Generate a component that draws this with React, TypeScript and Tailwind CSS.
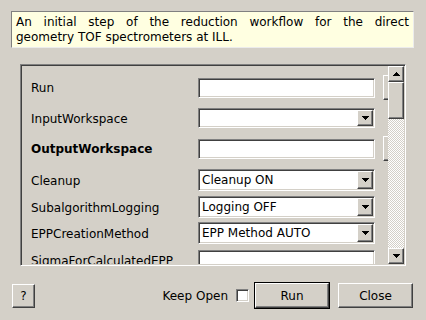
import React from "react";

const raised =
  "border border-t-white border-l-white border-r-[#404040] border-b-[#404040] shadow-[inset_-1px_-1px_0_#808080]";
const sunken =
  "border border-t-[#808080] border-l-[#808080] border-r-white border-b-white shadow-[inset_1px_1px_0_#404040,inset_-1px_-1px_0_#d4d0c8]";

function TriDown() {
  return (
    <svg width="7" height="4" viewBox="0 0 7 4" shapeRendering="crispEdges">
      <rect x="0" y="0" width="7" height="1" fill="#000" />
      <rect x="1" y="1" width="5" height="1" fill="#000" />
      <rect x="2" y="2" width="3" height="1" fill="#000" />
      <rect x="3" y="3" width="1" height="1" fill="#000" />
    </svg>
  );
}

function TriUp() {
  return (
    <svg width="7" height="4" viewBox="0 0 7 4" shapeRendering="crispEdges">
      <rect x="3" y="0" width="1" height="1" fill="#000" />
      <rect x="2" y="1" width="3" height="1" fill="#000" />
      <rect x="1" y="2" width="5" height="1" fill="#000" />
      <rect x="0" y="3" width="7" height="1" fill="#000" />
    </svg>
  );
}

function TextField() {
  return <div className={`w-[177px] h-[20px] shrink-0 bg-white ${sunken}`} />;
}

function Combo({ text, h = 22 }: { text?: string; h?: number }) {
  return (
    <div
      className={`w-[177px] shrink-0 bg-white ${sunken} flex items-stretch p-[1px] ${
        h === 22 ? "h-[22px]" : "h-[20px]"
      }`}
    >
      <div className="flex-1 flex items-center pl-[2px] text-[12px] leading-none text-black">
        {text}
      </div>
      <div className={`w-[16px] bg-[#d4d0c8] ${raised} flex items-center justify-center`}>
        <TriDown />
      </div>
    </div>
  );
}

function BrowseBtn() {
  return <div className={`ml-[8px] w-[26px] h-[25px] shrink-0 bg-[#d4d0c8] ${raised}`} />;
}

function Row({
  label,
  bold,
  mt,
  h,
  children,
}: {
  label: string;
  bold?: boolean;
  mt: string;
  h: string;
  children: React.ReactNode;
}) {
  return (
    <div className={`flex items-center pl-[9px] shrink-0 ${mt} ${h}`}>
      <div
        className={`w-[167px] shrink-0 pt-[1px] text-[12px] leading-none text-black whitespace-nowrap ${
          bold ? "font-bold" : ""
        }`}
      >
        {label}
      </div>
      {children}
    </div>
  );
}

export default function App() {
  return (
    <div className="w-[426px] h-[320px] bg-[#d4d0c8] flex flex-col overflow-hidden font-['DejaVu_Sans',sans-serif] text-black">
      {/* description */}
      <div className="mt-[11px] ml-[11px] w-[403px] h-[37px] shrink-0 bg-[#ffffe1] border border-t-[#808080] border-l-[#808080] border-r-[#ececec] border-b-[#ececec] pl-[4px] pr-[4px] pt-[3px] text-[12px] leading-[15px]">
        <div className="flex justify-between whitespace-nowrap">
          {"An initial step of the reduction workflow for the direct".split(" ").map((w, i) => (
            <span key={i}>{w}</span>
          ))}
        </div>
        <div>geometry TOF spectrometers at ILL.</div>
      </div>

      {/* scroll area frame */}
      <div className={`mt-[16px] ml-[20px] w-[386px] h-[202px] shrink-0 flex ${sunken} p-[1px] bg-[#d4d0c8]`}>
        <div className="flex-1 flex flex-col overflow-hidden">
          <Row label="Run" mt="mt-[9px]" h="h-[25px]">
            <TextField />
            <BrowseBtn />
          </Row>
          <Row label="InputWorkspace" mt="mt-[8px]" h="h-[20px]">
            <Combo h={20} />
          </Row>
          <Row label="OutputWorkspace" bold mt="mt-[8px]" h="h-[25px]">
            <TextField />
            <BrowseBtn />
          </Row>
          <Row label="Cleanup" mt="mt-[8px]" h="h-[22px]">
            <Combo text="Cleanup ON" />
          </Row>
          <Row label="SubalgorithmLogging" mt="mt-[5px]" h="h-[22px]">
            <Combo text="Logging OFF" />
          </Row>
          <Row label="EPPCreationMethod" mt="mt-[4px]" h="h-[22px]">
            <Combo text="EPP Method AUTO" />
          </Row>
          <Row label="SigmaForCalculatedEPP" mt="mt-[6px]" h="h-[20px]">
            <TextField />
          </Row>
        </div>
        {/* scrollbar */}
        <div className="w-[16px] shrink-0 flex flex-col">
          <div className={`h-[16px] shrink-0 bg-[#d4d0c8] ${raised} flex items-center justify-center`}>
            <TriUp />
          </div>
          <div className={`h-[37px] shrink-0 bg-[#d4d0c8] ${raised}`} />
          <div className="flex-1 [background:repeating-conic-gradient(#d4d0c8_0%_25%,#ffffff_0%_50%)_0_0/2px_2px]" />
          <div className={`h-[16px] shrink-0 bg-[#d4d0c8] ${raised} flex items-center justify-center`}>
            <TriDown />
          </div>
        </div>
      </div>

      {/* bottom buttons */}
      <div className="mt-[16px] h-[27px] shrink-0 flex items-center pl-[12px] pr-[13px] text-[12px] leading-none">
        <div className={`w-[23px] h-[24px] bg-[#d4d0c8] ${raised} flex items-center justify-center`}>?</div>
        <div className="flex-1" />
        <span className="mr-[8px]">Keep Open</span>
        <div className={`w-[13px] h-[13px] bg-white ${sunken}`} />
        <div className="ml-[5px] w-[76px] h-[27px] border border-black">
          <div className={`w-full h-full bg-[#d4d0c8] ${raised} flex items-center justify-center`}>Run</div>
        </div>
        <div className={`ml-[8px] w-[75px] h-[25px] bg-[#d4d0c8] ${raised} flex items-center justify-center`}>
          Close
        </div>
      </div>
    </div>
  );
}
